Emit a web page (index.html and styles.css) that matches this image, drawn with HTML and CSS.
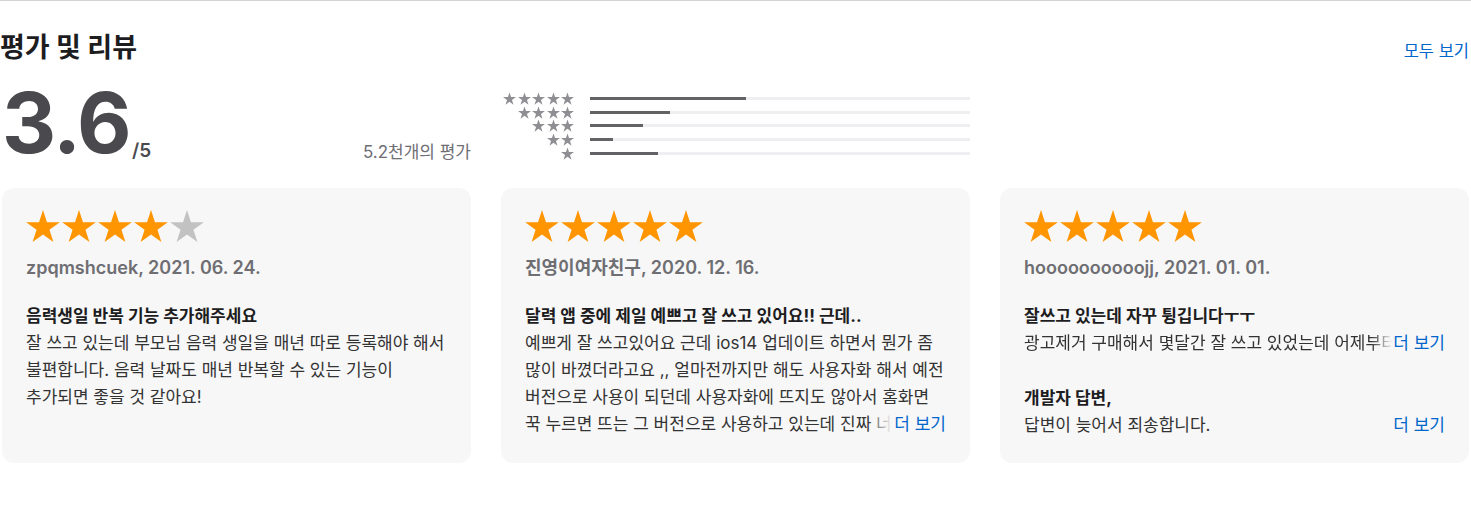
FILE: index.html
```html
<!DOCTYPE html>
<html lang="ko">
<head>
    <meta charset="UTF-8">
    <meta name="viewport" content="width=device-width, initial-scale=1.0">
    <title>평가 및 리뷰</title>
    <link rel="stylesheet" href="styles.css">
</head>
<body>
    <svg class="svg-defs" aria-hidden="true">
        <symbol id="star" viewBox="0 0 24 24">
            <path d="M12 0.7L14.81 9.34H23.89L16.54 14.68L19.35 23.31L12 17.98L4.65 23.31L7.46 14.68L0.11 9.34H9.19Z"/>
        </symbol>
    </svg>

    <section class="reviews">
        <header class="reviews-header">
            <h2>평가 및 리뷰</h2>
            <a href="#" class="see-all">모두 보기</a>
        </header>

        <div class="summary">
            <div class="score">
                <span class="score-value">3.6</span>
                <span class="score-max">/5</span>
                <span class="score-count">5.2천개의 평가</span>
            </div>

            <div class="histogram">
                <div class="hist-row">
                    <div class="hist-stars">
                        <svg><use href="#star"/></svg><svg><use href="#star"/></svg><svg><use href="#star"/></svg><svg><use href="#star"/></svg><svg><use href="#star"/></svg>
                    </div>
                    <div class="hist-bar"><div class="hist-fill" style="width: 41%"></div></div>
                </div>
                <div class="hist-row">
                    <div class="hist-stars">
                        <svg><use href="#star"/></svg><svg><use href="#star"/></svg><svg><use href="#star"/></svg><svg><use href="#star"/></svg>
                    </div>
                    <div class="hist-bar"><div class="hist-fill" style="width: 21%"></div></div>
                </div>
                <div class="hist-row">
                    <div class="hist-stars">
                        <svg><use href="#star"/></svg><svg><use href="#star"/></svg><svg><use href="#star"/></svg>
                    </div>
                    <div class="hist-bar"><div class="hist-fill" style="width: 14%"></div></div>
                </div>
                <div class="hist-row">
                    <div class="hist-stars">
                        <svg><use href="#star"/></svg><svg><use href="#star"/></svg>
                    </div>
                    <div class="hist-bar"><div class="hist-fill" style="width: 6%"></div></div>
                </div>
                <div class="hist-row">
                    <div class="hist-stars">
                        <svg><use href="#star"/></svg>
                    </div>
                    <div class="hist-bar"><div class="hist-fill" style="width: 18%"></div></div>
                </div>
            </div>
        </div>

        <div class="cards">
            <!-- 리뷰 1 -->
            <article class="card">
                <div class="card-stars">
                    <svg><use href="#star"/></svg><svg><use href="#star"/></svg><svg><use href="#star"/></svg><svg><use href="#star"/></svg><svg class="off"><use href="#star"/></svg>
                </div>
                <div class="card-author">zpqmshcuek, 2021. 06. 24.</div>
                <h3 class="card-title">음력생일 반복 기능 추가해주세요</h3>
                <p class="card-body">잘 쓰고 있는데 부모님 음력 생일을 매년 따로 등록해야 해서 불편합니다. 음력 날짜도 매년 반복할 수 있는 기능이 추가되면 좋을 것 같아요!</p>
            </article>

            <!-- 리뷰 2 -->
            <article class="card">
                <div class="card-stars">
                    <svg><use href="#star"/></svg><svg><use href="#star"/></svg><svg><use href="#star"/></svg><svg><use href="#star"/></svg><svg><use href="#star"/></svg>
                </div>
                <div class="card-author">진영이여자친구, 2020. 12. 16.</div>
                <h3 class="card-title">달력 앱 중에 제일 예쁘고 잘 쓰고 있어요!! 근데..</h3>
                <div class="clamp">
                    <p class="card-body">예쁘게 잘 쓰고있어요 근데 ios14 업데이트 하면서 뭔가 좀 많이 바꼈더라고요 ,, 얼마전까지만 해도 사용자화 해서 예전 버전으로 사용이 되던데 사용자화에 뜨지도 않아서 홈화면 꾹 누르면 뜨는 그 버전으로 사용하고 있는데 진짜 너무 불편해요 다시 예전처럼 쓸 수 있게 해주세요</p>
                    <a href="#" class="more more-over">더 보기</a>
                </div>
            </article>

            <!-- 리뷰 3 -->
            <article class="card">
                <div class="card-stars">
                    <svg><use href="#star"/></svg><svg><use href="#star"/></svg><svg><use href="#star"/></svg><svg><use href="#star"/></svg><svg><use href="#star"/></svg>
                </div>
                <div class="card-author">hoooooooooojj, 2021. 01. 01.</div>
                <h3 class="card-title">잘쓰고 있는데 자꾸 튕깁니다ㅜㅜ</h3>
                <div class="line">
                    <p class="card-body line-text fade">광고제거 구매해서 몇달간 잘 쓰고 있었는데 어제부터 앱을 켜자마자 자꾸 튕겨요</p>
                    <a href="#" class="more">더 보기</a>
                </div>
                <h3 class="card-title reply-title">개발자 답변,</h3>
                <div class="line">
                    <p class="card-body line-text">답변이 늦어서 죄송합니다.</p>
                    <a href="#" class="more">더 보기</a>
                </div>
            </article>
        </div>
    </section>
</body>
</html>
```

FILE: styles.css
```css
body {
    margin: 0;
    padding: 0;
    background-color: #fff;
    color: #1d1d1f;
    font-family: Inter, "Noto Sans CJK KR", sans-serif;
}

.svg-defs {
    position: absolute;
    width: 0;
    height: 0;
    overflow: hidden;
}

.reviews {
    border-top: 1px solid #d2d2d7;
}

.reviews-header {
    display: flex;
    justify-content: space-between;
    align-items: baseline;
    padding: 32px 2px 0 0;
}

.reviews-header h2 {
    margin: 0;
    font-size: 27px;
    line-height: 30px;
    font-weight: 700;
    color: #1d1d1f;
}

.see-all {
    font-size: 16.5px;
    color: #06c;
    text-decoration: none;
}

.summary {
    display: grid;
    grid-template-columns: repeat(3, minmax(0, 1fr));
    column-gap: 30px;
    padding: 0 2px;
    margin-top: 18px;
}

.score {
    display: flex;
    align-items: flex-end;
}

.score-value {
    font-size: 84px;
    line-height: 84px;
    font-weight: 700;
    letter-spacing: -1.5px;
    color: #4a4a4e;
}

.score-max {
    margin-left: 2px;
    font-size: 19px;
    line-height: 28px;
    font-weight: 600;
    color: #4a4a4e;
}

.score-count {
    margin-left: auto;
    font-size: 17px;
    line-height: 26px;
    color: #6e6e73;
}

.histogram {
    padding-top: 10.5px;
}

.hist-row {
    display: flex;
    align-items: center;
    gap: 16px;
    height: 13.7px;
}

.hist-stars {
    display: flex;
    justify-content: flex-end;
    gap: 1.5px;
    width: 73px;
}

.hist-stars svg {
    width: 13px;
    height: 13px;
    fill: #8e8e93;
}

.hist-bar {
    flex: 1;
    height: 3px;
    background-color: #efeff2;
}

.hist-fill {
    height: 100%;
    background-color: #636366;
}

.cards {
    display: grid;
    grid-template-columns: repeat(3, minmax(0, 1fr));
    column-gap: 30px;
    padding: 0 2px;
    margin-top: 23px;
}

.card {
    height: 275px;
    box-sizing: border-box;
    padding: 20px 24px;
    background-color: #f7f7f7;
    border-radius: 12px;
}

.card-stars {
    display: flex;
    gap: 2px;
    height: 36px;
    align-items: center;
}

.card-stars svg {
    width: 34px;
    height: 34px;
    fill: #ff9500;
}

.card-stars svg.off {
    fill: #c2c2c2;
}

.card-author {
    margin-top: 12px;
    font-size: 18px;
    line-height: 24px;
    font-weight: 600;
    color: #6e6e73;
}

.card-title {
    margin: 23px 0 0;
    font-size: 17px;
    line-height: 27px;
    font-weight: 700;
    color: #1d1d1f;
}

.reply-title {
    margin-top: 28px;
}

.card-body {
    margin: 0;
    font-size: 17px;
    line-height: 27px;
    color: #333;
    word-break: keep-all;
}

/* 4줄까지 보여주고 나머지는 가림 */
.clamp {
    position: relative;
    max-height: 108px;
    overflow: hidden;
}

.line {
    display: flex;
    align-items: baseline;
    justify-content: space-between;
}

.line-text {
    flex: 1;
    min-width: 0;
    white-space: nowrap;
    overflow: hidden;
}

.fade {
    -webkit-mask-image: linear-gradient(to right, #000 calc(100% - 22px), transparent);
    mask-image: linear-gradient(to right, #000 calc(100% - 22px), transparent);
}

.more {
    flex-shrink: 0;
    font-size: 17px;
    line-height: 27px;
    color: #06c;
    text-decoration: none;
}

.more-over {
    position: absolute;
    right: 0;
    bottom: 0;
    padding-left: 26px;
    background: linear-gradient(to right, rgba(247, 247, 247, 0), #f7f7f7 24px);
}
```
